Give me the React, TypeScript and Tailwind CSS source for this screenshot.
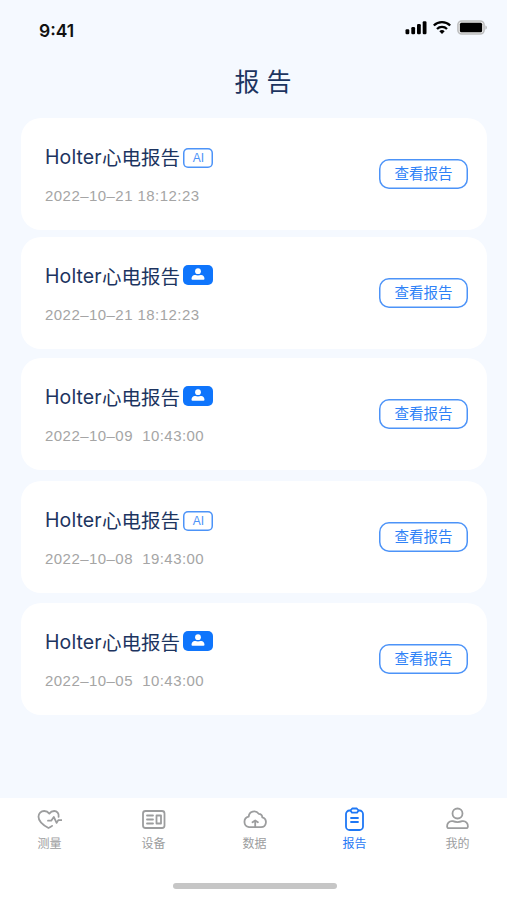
import type { ReactNode } from "react";

type Report = {
  date: string;
  kind: "ai" | "doctor";
  // gap to the card above and the card's own top padding
  spacing: string;
};

const REPORTS: Report[] = [
  { date: "2022–10–21 18:12:23", kind: "ai", spacing: "pt-[27px]" },
  { date: "2022–10–21 18:12:23", kind: "doctor", spacing: "mt-[7px] pt-[27px]" },
  { date: "2022–10–09  10:43:00", kind: "doctor", spacing: "mt-[9px] pt-[27px]" },
  { date: "2022–10–08  19:43:00", kind: "ai", spacing: "mt-[11px] pt-[27px]" },
  { date: "2022–10–05  10:43:00", kind: "doctor", spacing: "mt-[10px] pt-[27px]" },
];

const TABS: { label: string; active?: boolean; width: string; icon: ReactNode }[] = [
  {
    label: "测量",
    width: "w-[99px]",
    icon: (
      <>
        <path d="M21.600 9.800C22.200 6.500 20 4 17.200 4c-2 0-3.800 1.100-4.900 2.600C11.200 5.100 9.400 4 7.200 4 4 4 1.500 6.600 1.500 9.800c0 4.700 5 8.600 10 11.200 1.300-.5 2.500-1.200 3.600-2.100" />
        <path d="M11 13.700h3.200l2.600-3.800 2.800 6 1.700-2.800h3.200" />
      </>
    ),
  },
  {
    label: "设备",
    width: "w-[109px]",
    icon: (
      <>
        <rect x="2" y="4" width="21.500" height="17" rx="2.500" />
        <path d="M6 8.500h6M6 12.500h6M6 16.500h6" />
        <rect x="15.500" y="8.500" width="4.500" height="8" />
      </>
    ),
  },
  {
    label: "数据",
    width: "w-[93px]",
    icon: (
      <>
        <path d="M7 20.200h12a5 5 0 0 0 1.300-9.800 3.700 3.700 0 0 0-3.600-3.600 5.500 5.500 0 0 0-10 2.800A5.400 5.400 0 0 0 7 20.200z" />
        <path d="M13.200 20v-6M10.500 15.300l2.700-1.900 2.700 1.900" />
      </>
    ),
  },
  {
    label: "报告",
    active: true,
    width: "w-[107px]",
    icon: (
      <>
        <path d="M8.500 3.500h-1A3.500 3.500 0 0 0 4 7v12.500A3.500 3.500 0 0 0 7.500 23h10a3.500 3.500 0 0 0 3.500-3.500V7a3.500 3.500 0 0 0-3.500-3.500h-1" />
        <path d="M10.200 1.500h4.600l1.700 2-1.500 2.200h-5L8.500 3.500zM9 11h7M9 15h7" />
      </>
    ),
  },
  {
    label: "我的",
    width: "w-[99px]",
    icon: (
      <>
        <circle cx="12.500" cy="6.500" r="5" />
        <path d="M7.800 14.200q4.700 1.700 9.400 0c3.800-.6 6 2.600 5.700 5.300q-.1 1.700-1.900 1.700H4q-1.800 0-1.900-1.700c-.3-2.700 1.900-5.900 5.700-5.300z" />
      </>
    ),
  },
];

function StatusBar() {
  return (
    <div className="flex h-[56px] items-start justify-between pl-[39px] pr-[19px]">
      <span className="mt-[20px] font-['Inter','Liberation_Sans',sans-serif] text-[17.500px] font-semibold leading-[22px] text-[#111]">
        9:41
      </span>
      <div className="mt-[20px] flex items-center gap-[6px]">
        <svg className="h-[15px] w-[22px]" viewBox="0 0 22 15" fill="#000">
          <rect x="0.500" y="9.300" width="3.800" height="5" rx="1.200" />
          <rect x="6.300" y="7" width="3.800" height="7.300" rx="1.200" />
          <rect x="12" y="4" width="3.800" height="10.300" rx="1.200" />
          <rect x="17.700" y="1.200" width="3.800" height="13.100" rx="1.200" />
        </svg>
        <svg className="h-[15px] w-[18px]" viewBox="0 0 18 15" fill="none" stroke="#000" strokeWidth="2.300">
          <path d="M.8 5.500a11.500 11.500 0 0 1 16.400 0M4 9a7.100 7.100 0 0 1 10 0" />
          <path d="M6.300 11.200a4 4 0 0 1 5.400 0L9 14z" fill="#000" stroke="none" />
        </svg>
        <svg className="h-[15px] w-[31px]" viewBox="0 0 31 15">
          <rect x="0.900" y="0.900" width="26.200" height="13.200" rx="3.800" fill="#e8e8e8" stroke="#bdbebf" strokeWidth="1.500" />
          <rect x="2.900" y="2.800" width="22.200" height="9.400" rx="1.500" fill="#000" />
          <path d="M28.300 5.500c2.200.6 2.200 3.600 0 4.200z" fill="#bdbebf" />
        </svg>
      </div>
    </div>
  );
}

function Badge({ kind }: { kind: Report["kind"] }) {
  if (kind === "ai") {
    return (
      <span className="-mt-px ml-[3px] flex h-[20px] w-[30px] items-center justify-center rounded-[5px] pl-px text-[12px] leading-none text-[#4c93f8] shadow-[inset_0_0_0_1.5px_#4c93f8]">
        AI
      </span>
    );
  }
  return (
    <span className="-mt-[4px] ml-[3px] flex h-[20px] w-[30px] items-center justify-center rounded-[5px] bg-[#0f75fc]">
      <svg className="-mt-px h-[13px] w-[14px]" viewBox="0 0 14 13" fill="#fff">
        <circle cx="7" cy="3.200" r="2.900" />
        <path d="M.5 10.800C.5 8 2.600 6.600 4.300 7q2.700.9 5.400 0c1.700-.4 3.800 1 3.800 3.800q0 .9-1 .9h-11q-1 0-1-.9z" />
      </svg>
    </span>
  );
}

function ReportCard({ report }: { report: Report }) {
  return (
    <li className={`flex h-[112px] justify-between rounded-[20px] bg-white pl-[24px] pr-[19px] ${report.spacing}`}>
      <div>
        <div className="flex h-[26px] items-center text-[#1c3460]">
          <span className="w-[57px] whitespace-nowrap font-['Inter','Liberation_Sans',sans-serif] text-[19.500px] tracking-[0.100px]">
            Holter
          </span>
          <span className="text-[19.500px] leading-[26px]">心电报告</span>
          <Badge kind={report.kind} />
        </div>
        <p className="mt-[15px] whitespace-pre text-[15px] leading-[20px] tracking-[0.450px] text-[#a5a5a5]">
          {report.date}
        </p>
      </div>
      <button className="mt-[14px] h-[30px] w-[89px] rounded-[10px] text-[14.500px] leading-[28px] text-[#2f82f7] shadow-[inset_0_0_0_1.5px_#4c93f8]">
        查看报告
      </button>
    </li>
  );
}

function TabBar() {
  return (
    <nav className="flex h-[102px] flex-col items-center bg-white">
      <div className="flex w-full pt-[9px]">
        {TABS.map((tab) => (
          <a
            key={tab.label}
            className={`flex flex-col items-center ${tab.width} ${tab.active ? "text-[#1f78f5]" : "text-[#9c9d9e]"}`}
          >
            <svg
              className="h-[25px] w-[25px]"
              viewBox="0 0 25 25"
              fill="none"
              stroke="currentColor"
              strokeWidth="1.800"
              strokeLinecap="round"
              strokeLinejoin="round"
            >
              {tab.icon}
            </svg>
            <span className="mt-[3px] text-[12px] leading-[18px]">{tab.label}</span>
          </a>
        ))}
      </div>
      <div className="ml-[2px] mt-[30px] h-[6px] w-[164px] rounded-full bg-[#c6c6c6]" />
    </nav>
  );
}

export default function App() {
  return (
    <div className="flex h-[900px] w-[507px] flex-col overflow-hidden bg-[#f5f9ff] font-['Liberation_Sans','Noto_Sans_CJK_SC',sans-serif]">
      <StatusBar />
      <h1 className="h-[62px] pl-[19px] pt-[8px] text-center text-[25px] leading-[36px] text-[#1c3460]">
        报 告
      </h1>
      <ul className="flex-1 pl-[21px] pr-[20px]">
        {REPORTS.map((report, i) => (
          <ReportCard key={i} report={report} />
        ))}
      </ul>
      <TabBar />
    </div>
  );
}
